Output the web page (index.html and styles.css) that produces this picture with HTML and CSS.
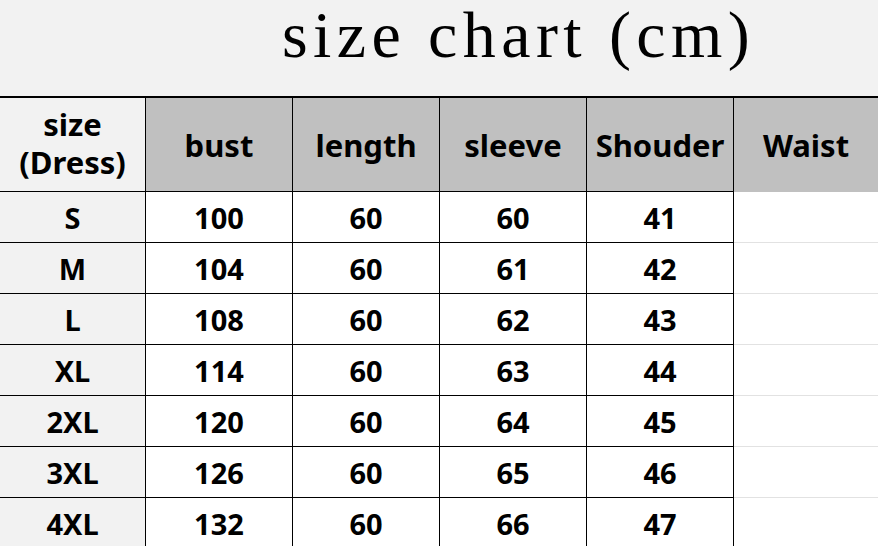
FILE: index.html
```html
<!DOCTYPE html>
<html>
<head>
<meta charset="utf-8">
<link rel="stylesheet" href="styles.css">
</head>
<body>
<div class="page">
  <header class="title-bar"><h1 class="title">size chart (cm)</h1></header>
  <div class="chart">
    <div class="cell head first">size<br>(Dress)</div>
    <div class="cell head">bust</div>
    <div class="cell head">length</div>
    <div class="cell head">sleeve</div>
    <div class="cell head">Shouder</div>
    <div class="cell head last">Waist</div>

    <div class="cell first">S</div><div class="cell">100</div><div class="cell">60</div><div class="cell">60</div><div class="cell">41</div><div class="cell last"></div>
    <div class="cell first">M</div><div class="cell">104</div><div class="cell">60</div><div class="cell">61</div><div class="cell">42</div><div class="cell last"></div>
    <div class="cell first">L</div><div class="cell">108</div><div class="cell">60</div><div class="cell">62</div><div class="cell">43</div><div class="cell last"></div>
    <div class="cell first">XL</div><div class="cell">114</div><div class="cell">60</div><div class="cell">63</div><div class="cell">44</div><div class="cell last"></div>
    <div class="cell first">2XL</div><div class="cell">120</div><div class="cell">60</div><div class="cell">64</div><div class="cell">45</div><div class="cell last"></div>
    <div class="cell first">3XL</div><div class="cell">126</div><div class="cell">60</div><div class="cell">65</div><div class="cell">46</div><div class="cell last"></div>
    <div class="cell first">4XL</div><div class="cell">132</div><div class="cell">60</div><div class="cell">66</div><div class="cell">47</div><div class="cell last"></div>
  </div>
</div>
</body>
</html>
```

FILE: styles.css
```css
html, body {
  margin: 0;
  padding: 0;
  background: #f2f2f2;
}
.page {
  width: 878px;
  height: 546px;
  overflow: hidden;
}
.title-bar {
  height: 96px;
  padding: 0 0 0 282px;
  box-sizing: border-box;
  display: flex;
  align-items: flex-start;
}
.title {
  margin: 0;
  padding: 0 4px 0 0;
  font-family: "Liberation Serif", serif;
  font-weight: normal;
  font-size: 66px;
  letter-spacing: 5.4px;
  line-height: 76px;
  color: #000;
  white-space: nowrap;
  position: relative;
  top: -3px;
}
.chart {
  display: grid;
  grid-template-columns: 146px 147px 147px 147px 147px 1fr;
  grid-template-rows: 94px repeat(7, 51px);
  border-top: 2px solid #000;
}
.cell {
  display: flex;
  align-items: center;
  justify-content: center;
  text-align: center;
  background: #fff;
  border-right: 1px solid #000;
  border-bottom: 1px solid #000;
  font-family: "Noto Sans", "Open Sans", sans-serif;
  font-weight: bold;
  font-size: 29px;
  color: #000;
}
.head {
  background: #c0c0c0;
  font-size: 31px;
}
.first {
  background: #f2f2f2;
}
.head.first {
  line-height: 38px;
  padding-bottom: 4px;
}
.last {
  border-right: none;
  border-bottom: 1px solid #e2e2e2;
}
.head.last {
  background: #c0c0c0;
  border-bottom: 1px solid #c0c0c0;
}
```
